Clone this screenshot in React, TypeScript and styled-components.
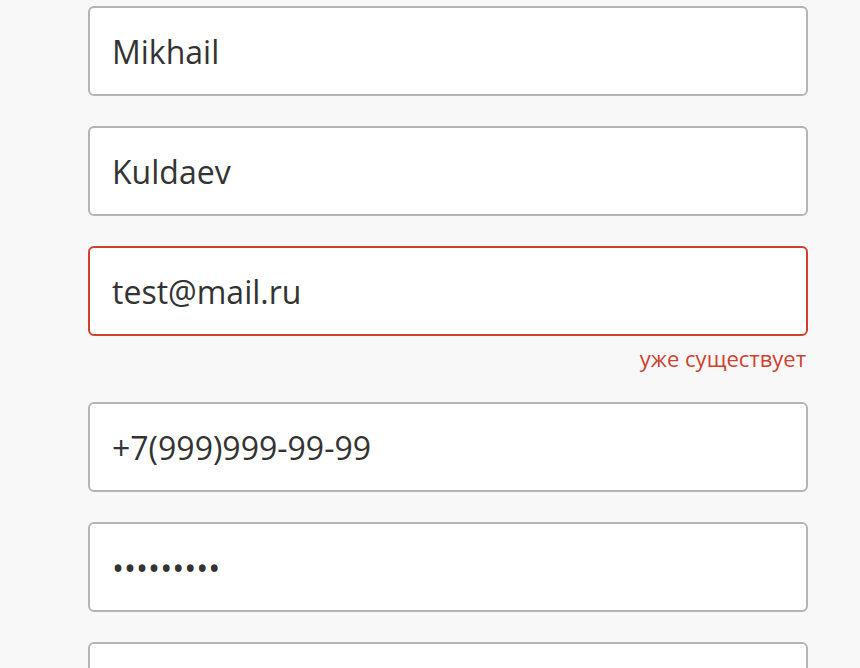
import React from "react";
import styled, { createGlobalStyle } from "styled-components";

const GlobalStyle = createGlobalStyle`
  html, body {
    margin: 0;
    padding: 0;
    background: #f8f8f8;
    font-family: "Open Sans", "Noto Sans", sans-serif;
  }
`;

type Field = {
  value: string;
  type?: string;
  error?: string;
};

const fields: Field[] = [
  { value: "Mikhail" },
  { value: "Kuldaev" },
  { value: "test@mail.ru", type: "email", error: "уже существует" },
  { value: "+7(999)999-99-99", type: "tel" },
  { value: "password1", type: "password" },
  { value: "" },
];

function App() {
  return (
    <>
      <GlobalStyle />
      <Form onSubmit={(e) => e.preventDefault()}>
        {fields.map((f, i) => (
          <Row key={i}>
            <Input
              type={f.type || "text"}
              defaultValue={f.value}
              $invalid={!!f.error}
            />
            {f.error && <Error>{f.error}</Error>}
          </Row>
        ))}
      </Form>
    </>
  );
}

export default App;

const Form = styled.form`
  display: flex;
  flex-direction: column;
  gap: 30px;
  width: 720px;
  padding: 6px 0 0 88px;
`;

const Row = styled.div`
  display: flex;
  flex-direction: column;
`;

const Input = styled.input<{ $invalid?: boolean }>`
  box-sizing: border-box;
  width: 720px;
  height: 90px;
  padding: 0 22px;
  background: #fff;
  border: 2px solid ${(p) => (p.$invalid ? "#d0402f" : "#b4b4b4")};
  border-radius: 6px;
  font-family: "Open Sans", "Noto Sans", sans-serif;
  font-size: 32px;
  color: #333;
  outline: none;
`;

const Error = styled.div`
  margin-top: 8px;
  align-self: flex-end;
  margin-right: 2px;
  font-size: 22px;
  line-height: 28px;
  color: #d0402f;
`;
